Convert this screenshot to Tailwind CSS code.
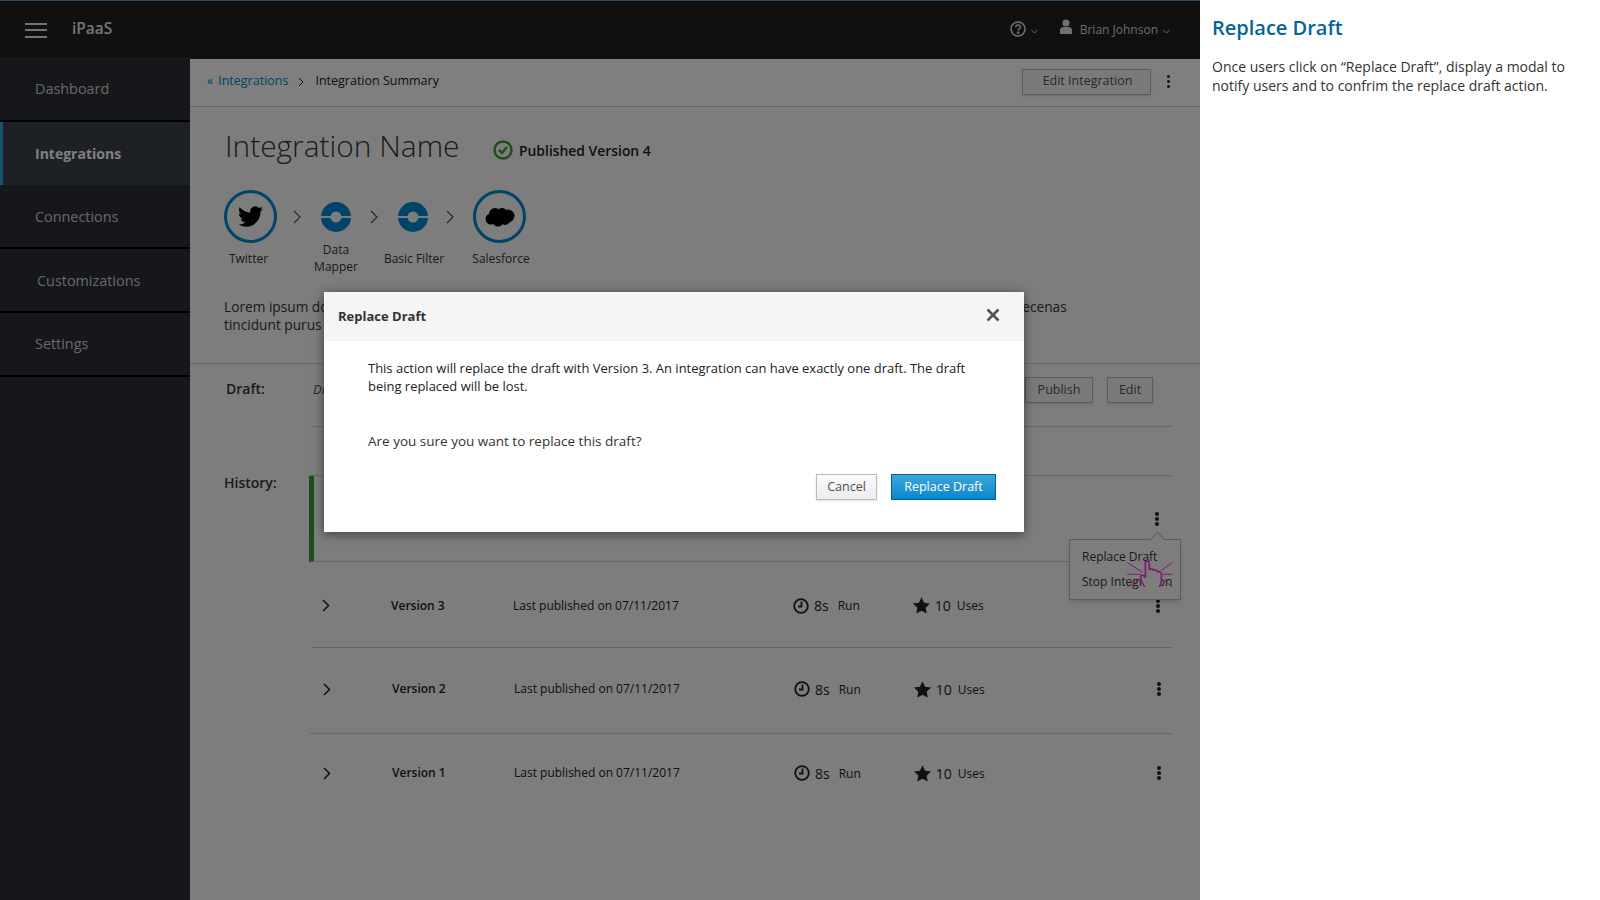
<!DOCTYPE html>
<html lang="en">
<head>
  <meta charset="UTF-8">
  <script src="https://cdn.jsdelivr.net/npm/@tailwindcss/browser@4"></script>
  <title>Replace Draft</title>
</head>
<body class="font-['Open_Sans',sans-serif] bg-white overflow-hidden">
  <div class="flex w-[1600px] h-[900px]">
    <!-- app -->
    <div class="relative w-[1200px] h-[900px] overflow-hidden flex flex-col shrink-0">
      <header class="h-[57px] shrink-0 bg-[#202020] border-t border-[#5a94c0] flex items-center">
        <div class="ml-[25px] mt-[2px] w-[22px] flex flex-col gap-[4.5px]">
          <span class="block h-[2px] bg-[#e8e8e8]"></span>
          <span class="block h-[2px] bg-[#e8e8e8]"></span>
          <span class="block h-[2px] bg-[#e8e8e8]"></span>
        </div>
        <span class="ml-[25px] text-[15.5px] font-semibold text-[#e8e8e8]">iPaaS</span>
        <div class="ml-auto mr-[30px] mt-[2px] flex items-center text-[#d8d8d8]">
          <svg class="mb-[2px] w-[16px] h-[16px]" viewBox="0 0 16 16" fill="none" stroke="#e0e0e0" stroke-width="1.5"><circle cx="8" cy="8" r="7"/><path d="M5.8 6.2c0-3 4.6-3 4.6-.1 0 1.8-2.3 1.9-2.3 3.6" /><circle cx="8.1" cy="11.8" r=".5" fill="#e0e0e0"/></svg>
          <svg class="ml-[5px] mt-[3px] w-[7px] h-[5px]" viewBox="0 0 7 5" fill="none" stroke="#d8d8d8"><path d="M.5 1l3 3 3-3"/></svg>
          <svg class="ml-[21px] mb-[6px] w-[14px] h-[16px]" viewBox="0 0 14 16" fill="#e0e0e0"><circle cx="7" cy="4" r="3.6"/><path d="M1 15V11c0-2.300 2-3 3.500-3h5c1.500 0 3.500.7 3.500 3v4z"/></svg>
          <span class="ml-[7px] text-[12px] text-[#d8d8d8]">Brian Johnson</span>
          <svg class="ml-[5px] mt-[3px] w-[7px] h-[5px]" viewBox="0 0 7 5" fill="none" stroke="#d8d8d8"><path d="M.5 1l3 3 3-3"/></svg>
        </div>
      </header>

      <div class="flex flex-1 min-h-0">
        <!-- sidebar -->
        <nav class="w-[190px] shrink-0 bg-[#2a2e36] text-[14.4px] text-[#d1d1d1]">
          <div class="h-[65px] flex items-center pl-[35px] border-b-2 border-black">Dashboard</div>
          <div class="h-[63px] flex items-center pl-[32px] pb-[1px] border-l-[3px] border-[#39a5dc] bg-[#3a4149] text-[14px] font-bold text-white">Integrations</div>
          <div class="h-[64px] flex items-center pl-[35px] pt-[2px] border-b-2 border-black">Connections</div>
          <div class="h-[64px] flex items-center pl-[37px] pt-[2px] border-b-2 border-black">Customizations</div>
          <div class="h-[64px] flex items-center pl-[35px] border-b-2 border-black">Settings</div>
        </nav>

        <!-- main -->
        <main class="flex-1 flex flex-col bg-[#fafafa] border-t-2 border-[#202020] text-[#222]">
          <div class="h-[48px] shrink-0 bg-white border-b border-[#d1d1d1] flex items-center pl-[17px] pb-[2px] text-[12.5px]">
            <span class="text-[#0088ce]">«</span>
            <span class="ml-[5px] text-[#0088ce]">Integrations</span>
            <svg class="ml-[10px] w-[6px] h-[10px]" viewBox="0 0 6 10" fill="none" stroke="#222"><path d="M1 1l4 4-4 4"/></svg>
            <span class="ml-[11px] font-medium text-[#222]">Integration Summary</span>
            <button class="ml-auto h-[26px] w-[129px] pl-[2px] border border-[#bbb] bg-[#f5f5f5] shadow-sm text-[12.5px] text-[#4d5258]">Edit Integration</button>
            <div class="ml-[16px] mr-[30px] flex flex-col gap-[2px]">
              <span class="block w-[3px] h-[3px] rounded-full bg-[#222]"></span>
              <span class="block w-[3px] h-[3px] rounded-full bg-[#222]"></span>
              <span class="block w-[3px] h-[3px] rounded-full bg-[#222]"></span>
            </div>
          </div>

          <section class="h-[257px] shrink-0 border-b border-[#d1d1d1] pl-[34px]">
            <div class="flex items-center h-[40px] mt-[19px]">
              <h1 class="ml-[1px] w-[235px] whitespace-nowrap text-[29.9px] font-light text-[#363636] leading-none">Integration Name</h1>
              <svg class="ml-[33px] mt-[8px] w-[20px] h-[20px]" viewBox="0 0 20 20" fill="none"><circle cx="10" cy="10" r="8.500" stroke="#3f9c35" stroke-width="2.500"/><path d="M6 10l3 3 5-6" stroke="#3f9c35" stroke-width="2.500"/></svg>
              <span class="ml-[6px] mt-[10px] text-[13.9px] font-semibold text-[#222]">Published Version 4</span>
            </div>

            <div class="flex mt-[24px] h-[84px]">
              <div class="w-[53px] flex flex-col items-center">
                <div class="w-[53px] h-[53px] shrink-0 rounded-full border-[3px] border-[#0088ce] flex items-center justify-center">
                  <svg class="w-[25px] h-[25px]" viewBox="0 0 24 24" fill="#000"><path d="M23.953 4.570a10 10 0 01-2.825.775 4.958 4.958 0 002.163-2.723c-.951.555-2.005.959-3.127 1.184a4.920 4.920 0 00-8.384 4.482C7.690 8.095 4.067 6.130 1.640 3.162a4.822 4.822 0 00-.666 2.475c0 1.710.870 3.213 2.188 4.096a4.904 4.904 0 01-2.228-.616v.060a4.923 4.923 0 003.946 4.827 4.996 4.996 0 01-2.212.085 4.936 4.936 0 004.604 3.417 9.867 9.867 0 01-6.102 2.105c-.390 0-.779-.023-1.170-.067a13.995 13.995 0 007.557 2.209c9.053 0 13.998-7.496 13.998-13.985 0-.210 0-.420-.015-.630A9.935 9.935 0 0024 4.590z"/></svg>
                </div>
                <span class="mt-[7px] -ml-[4px] text-[12px] text-[#363636]">Twitter</span>
              </div>
              <div class="w-[44px] h-[53px] pr-[4px] flex items-center justify-center"><svg class="w-[8px] h-[14px]" viewBox="0 0 8 14" fill="none" stroke="#555" stroke-width="1.200"><path d="M1 1l6 6-6 6"/></svg></div>
              <div class="w-[30px] flex flex-col items-center">
                <div class="w-[30px] h-[53px] shrink-0 flex items-center justify-center">
                  <svg class="w-[30px] h-[30px]" viewBox="0 0 30 30"><circle cx="15" cy="15" r="15" fill="#0088ce"/><rect y="14" width="30" height="2" fill="#fafafa"/><circle cx="15" cy="15" r="5.500" fill="#fafafa"/></svg>
                </div>
                <span class="-mt-[2px] whitespace-nowrap text-[12px] leading-[17px] text-[#363636] text-center">Data<br>Mapper</span>
              </div>
              <div class="w-[47px] h-[53px] pr-[2px] flex items-center justify-center"><svg class="w-[8px] h-[14px]" viewBox="0 0 8 14" fill="none" stroke="#555" stroke-width="1.200"><path d="M1 1l6 6-6 6"/></svg></div>
              <div class="w-[30px] flex flex-col items-center">
                <div class="w-[30px] h-[53px] shrink-0 flex items-center justify-center">
                  <svg class="w-[30px] h-[30px]" viewBox="0 0 30 30"><circle cx="15" cy="15" r="15" fill="#0088ce"/><rect y="14" width="30" height="2" fill="#fafafa"/><circle cx="15" cy="15" r="5.500" fill="#fafafa"/></svg>
                </div>
                <span class="mt-[7px] ml-[2px] whitespace-nowrap text-[12px] text-[#363636]">Basic Filter</span>
              </div>
              <div class="w-[45px] h-[53px] pr-[2px] flex items-center justify-center"><svg class="w-[8px] h-[14px]" viewBox="0 0 8 14" fill="none" stroke="#555" stroke-width="1.200"><path d="M1 1l6 6-6 6"/></svg></div>
              <div class="w-[53px] flex flex-col items-center">
                <div class="w-[53px] h-[53px] shrink-0 rounded-full border-[3px] border-[#0088ce] flex items-center justify-center">
                  <svg class="w-[30px] h-[20px]" viewBox="0 0 30 20" fill="#000"><circle cx="10" cy="7" r="6"/><circle cx="17" cy="6" r="5"/><circle cx="23" cy="9" r="6.500"/><circle cx="6" cy="12" r="5.500"/><circle cx="13" cy="14" r="5.500"/><circle cx="20" cy="13" r="5"/></svg>
                </div>
                <span class="mt-[7px] ml-[3px] whitespace-nowrap text-[12px] text-[#363636]">Salesforce</span>
              </div>
            </div>

            <p class="mt-[24px] whitespace-nowrap text-[13.7px] leading-[18px] text-[#363636]">
              Lorem ipsum dolor sit amet, consectetur adipiscing elit. Sed posuere consectetur est at lobortis. Nulla vitae elit libero. Sed maecenas<br>tincidunt purus eget risus varius blandit sit amet non magna.
            </p>
          </section>

          <div class="flex h-[63px] shrink-0 mr-[28px]">
            <span class="w-[86px] ml-[36px] shrink-0 pt-[14px] text-[14px] font-semibold text-[#363636]">Draft:</span>
            <div class="flex-1 flex border-b border-[#d1d1d1] pt-[13px]">
              <span class="ml-[1px] pt-[3px] text-[13px] italic text-[#555]">Draft</span>
              <button class="ml-auto w-[68px] h-[26px] border border-[#bbb] bg-[#f5f5f5] shadow-sm text-[12.5px] text-[#4d5258]">Publish</button>
              <button class="ml-[14px] mr-[19px] w-[46px] h-[26px] border border-[#bbb] bg-[#f5f5f5] shadow-sm text-[12.5px] text-[#4d5258]">Edit</button>
            </div>
          </div>

          <div class="flex flex-1 min-h-0 pt-[48px] mr-[28px]">
            <span class="w-[119px] pl-[34px] shrink-0 -mt-[1px] text-[14px] font-semibold text-[#363636] leading-[18px]">History:</span>
            <div class="flex-1 border-t border-[#d1d1d1] text-[12px]">
              <div class="relative h-[86px] border-l-[5px] border-[#3f9c35] border-b border-b-[#d1d1d1] flex items-center">
                <svg class="ml-[9px] mt-[-1px] w-[8px] h-[13px]" viewBox="0 0 8 13" fill="none" stroke="#222" stroke-width="1.500"><path d="M1 1l5.500 5.500L1 12"/></svg>
                <div class="ml-auto mr-[13px] flex flex-col gap-[1px]">
                  <span class="block w-[4px] h-[4px] rounded-full bg-[#222]"></span>
                  <span class="block w-[4px] h-[4px] rounded-full bg-[#222]"></span>
                  <span class="block w-[4px] h-[4px] rounded-full bg-[#222]"></span>
                </div>
                <!-- row menu -->
                <div class="absolute left-[755px] top-[63px] z-10 w-[112px] h-[61px] bg-[#fafafa] border border-[#bbb] shadow-md pl-[12px] pt-[4px] text-[12px] leading-[25px] text-[#363636]">
                  <span class="absolute left-[82px] -top-[6px] w-[11px] h-[11px] rotate-45 bg-[#fafafa] border-l border-t border-[#bbb]"></span>
                  <div class="whitespace-nowrap">Replace Draft</div>
                  <div class="whitespace-nowrap">Stop Integration</div>
                  <svg class="absolute left-[54px] top-[17px] w-[50px] h-[34px]" viewBox="0 0 150 102" fill="none" stroke="#ff38ee" stroke-width="3">
                    <path d="M10 17l45 28M10 52h40M10 90l40-25M145 17l-35 25M145 52h-35M145 90l-25-20"/>
                    <path fill="#fafafa" stroke-width="5" d="M62 90C55 78 48 68 50 58c2-6 10-4 14 4V20c0-10 12-10 12 0v20c2-6 12-6 12 2 2-6 12-4 12 4 2-4 12-2 12 6v20c0 8-4 14-6 18"/>
                  </svg>
                </div>
              </div>

              <div class="h-[86px] ml-[2px] pt-[2px] border-b border-[#d1d1d1] flex items-center text-[#222]">
                <svg class="ml-[11px] w-[8px] h-[13px]" viewBox="0 0 8 13" fill="none" stroke="#222" stroke-width="1.500"><path d="M1 1l5.500 5.500L1 12"/></svg>
                <span class="ml-[61px] w-[122px] font-semibold">Version 3</span>
                <span class="w-[280px]">Last published on 07/11/2017</span>
                <svg class="w-[16px] h-[16px]" viewBox="0 0 16 16" fill="none" stroke="#222" stroke-width="1.800"><circle cx="8" cy="8" r="6.800"/><path d="M8.500 3.500V8.500H5"/></svg>
                <span class="ml-[5px] text-[14px]">8s</span>
                <span class="ml-[9px] mt-[1px] w-[75px]">Run</span>
                <svg class="w-[17px] h-[17px]" viewBox="0 0 24 24" fill="#222"><path d="M12 .5l3.600 7.600 8.400 1.100-6.100 5.800 1.500 8.300L12 19.300l-7.400 4 1.500-8.300L0 9.200l8.400-1.100z"/></svg>
                <span class="ml-[5px] text-[14px]">10</span>
                <span class="ml-[6px] mt-[1px]">Uses</span>
                <div class="ml-auto mr-[12px] flex flex-col gap-[1px]">
                  <span class="block w-[4px] h-[4px] rounded-full bg-[#222]"></span>
                  <span class="block w-[4px] h-[4px] rounded-full bg-[#222]"></span>
                  <span class="block w-[4px] h-[4px] rounded-full bg-[#222]"></span>
                </div>
              </div>

              <div class="h-[86px] ml-[1px] pb-[3px] border-b border-[#d1d1d1] flex items-center text-[#222]">
                <svg class="ml-[13px] w-[8px] h-[13px]" viewBox="0 0 8 13" fill="none" stroke="#222" stroke-width="1.500"><path d="M1 1l5.500 5.500L1 12"/></svg>
                <span class="ml-[61px] w-[122px] font-semibold">Version 2</span>
                <span class="w-[280px]">Last published on 07/11/2017</span>
                <svg class="w-[16px] h-[16px]" viewBox="0 0 16 16" fill="none" stroke="#222" stroke-width="1.800"><circle cx="8" cy="8" r="6.800"/><path d="M8.500 3.500V8.500H5"/></svg>
                <span class="ml-[5px] text-[14px]">8s</span>
                <span class="ml-[9px] mt-[1px] w-[75px]">Run</span>
                <svg class="w-[17px] h-[17px]" viewBox="0 0 24 24" fill="#222"><path d="M12 .5l3.600 7.600 8.400 1.100-6.100 5.800 1.500 8.300L12 19.300l-7.400 4 1.500-8.300L0 9.200l8.400-1.100z"/></svg>
                <span class="ml-[5px] text-[14px]">10</span>
                <span class="ml-[6px] mt-[1px]">Uses</span>
                <div class="ml-auto mr-[11px] flex flex-col gap-[1px]">
                  <span class="block w-[4px] h-[4px] rounded-full bg-[#222]"></span>
                  <span class="block w-[4px] h-[4px] rounded-full bg-[#222]"></span>
                  <span class="block w-[4px] h-[4px] rounded-full bg-[#222]"></span>
                </div>
              </div>

              <div class="h-[78px] ml-[1px] flex items-center text-[#222]">
                <svg class="ml-[13px] w-[8px] h-[13px]" viewBox="0 0 8 13" fill="none" stroke="#222" stroke-width="1.500"><path d="M1 1l5.500 5.500L1 12"/></svg>
                <span class="ml-[61px] w-[122px] font-semibold">Version 1</span>
                <span class="w-[280px]">Last published on 07/11/2017</span>
                <svg class="w-[16px] h-[16px]" viewBox="0 0 16 16" fill="none" stroke="#222" stroke-width="1.800"><circle cx="8" cy="8" r="6.800"/><path d="M8.500 3.500V8.500H5"/></svg>
                <span class="ml-[5px] text-[14px]">8s</span>
                <span class="ml-[9px] mt-[1px] w-[75px]">Run</span>
                <svg class="w-[17px] h-[17px]" viewBox="0 0 24 24" fill="#222"><path d="M12 .5l3.600 7.600 8.400 1.100-6.100 5.800 1.500 8.300L12 19.300l-7.400 4 1.500-8.300L0 9.200l8.400-1.100z"/></svg>
                <span class="ml-[5px] text-[14px]">10</span>
                <span class="ml-[6px] mt-[1px]">Uses</span>
                <div class="ml-auto mr-[11px] flex flex-col gap-[1px]">
                  <span class="block w-[4px] h-[4px] rounded-full bg-[#222]"></span>
                  <span class="block w-[4px] h-[4px] rounded-full bg-[#222]"></span>
                  <span class="block w-[4px] h-[4px] rounded-full bg-[#222]"></span>
                </div>
              </div>
            </div>
          </div>
        </main>
      </div>

      <!-- backdrop + modal -->
      <div class="absolute inset-0 z-20 bg-black/50"></div>
      <div class="absolute z-30 left-[324px] top-[292px] w-[700px] h-[240px] bg-white shadow-[0_2px_10px_rgba(0,0,0,0.5)] flex flex-col">
        <div class="h-[49px] shrink-0 bg-[#f5f5f5] flex items-center pl-[14px] pr-[24px]">
          <span class="text-[13px] font-bold text-[#333]">Replace Draft</span>
          <svg class="ml-auto mt-[-4px] w-[14px] h-[14px]" viewBox="0 0 14 14" fill="none" stroke="#4d5258" stroke-width="2.500"><path d="M1.500 1.500l11 11M12.500 1.500l-11 11"/></svg>
        </div>
        <div class="pl-[44px] pr-[40px] pt-[18px] text-[12.97px] leading-[18px] text-[#222]">
          <p>This action will replace the draft with Version 3. An integration can have exactly one draft. The draft being replaced will be lost.</p>
          <p class="mt-[37px] text-[13.5px] font-medium text-[#333]">Are you sure you want to replace this draft?</p>
        </div>
        <div class="mt-[24px] flex justify-end pr-[28px]">
          <button class="w-[61px] h-[26px] border border-[#bbb] bg-gradient-to-b from-[#fafafa] to-[#ededed] shadow-sm text-[12.5px] text-[#4d5258]">Cancel</button>
          <button class="ml-[14px] w-[105px] h-[26px] border border-[#00659c] bg-gradient-to-b from-[#39a5dc] to-[#0088ce] text-[12.5px] text-white">Replace Draft</button>
        </div>
      </div>
    </div>

    <!-- note panel -->
    <aside class="flex-1 pl-[12px] pr-[12px] pt-[13px]">
      <h2 class="text-[20px] font-semibold leading-[30px] text-[#006699]">Replace Draft</h2>
      <p class="mt-[14px] text-[14px] leading-[19px] text-[#333]">Once users click on “Replace Draft”, display a modal to notify users and to confrim the replace draft action.</p>
    </aside>
  </div>
</body>
</html>
